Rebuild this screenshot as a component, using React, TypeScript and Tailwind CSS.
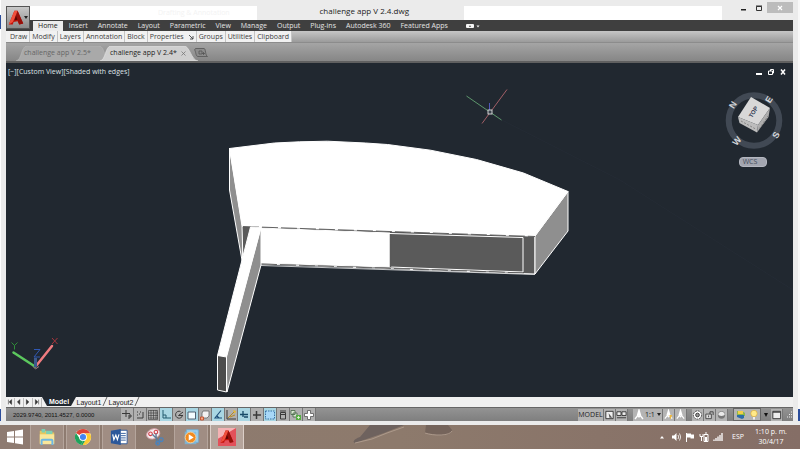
import type { ReactNode } from 'react';

const ribbonTabs = [
  'Insert',
  'Annotate',
  'Layout',
  'Parametric',
  'View',
  'Manage',
  'Output',
  'Plug-ins',
  'Autodesk 360',
  'Featured Apps',
];

const panels = ['Draw', 'Modify', 'Layers', 'Annotation', 'Block', 'Properties', 'Groups', 'Utilities', 'Clipboard'];

const AutocadMark = () => (
  <>
    <path d="M1 18 8 1h4l7 16-5 1-2-4-5 1-1 3z" fill="#c3140c" />
    <path d="M8 1h4l-2 6-4 8-5 3z" fill="#f0503c" />
    <path d="m10 6 3 6-5 1z" fill="#5a0803" />
    <path d="m12 1 7 16-5 1-4-11z" fill="#96100a" />
  </>
);

const TitleBar = () => (
  <header className="relative flex h-5 items-start pl-6">
    <button
      type="button"
      aria-label="Application menu"
      className="absolute left-0 top-1.5 z-10 flex h-[23px] w-6 items-center justify-center border border-[#555] bg-gradient-to-b from-[#c9c9c9] to-[#8b8b8b]"
    >
      <svg viewBox="0 0 20 20" className="h-4 w-4">
        <AutocadMark />
      </svg>
      <svg viewBox="0 0 4 3" className="h-[3px] w-1">
        <path d="M0 0h4L2 3z" fill="#222" />
      </svg>
    </button>
    <div className="mt-1.5 flex h-3.5 min-w-0 flex-[230] bg-white">
      <select
        aria-label="Workspace"
        className="h-3.5 w-full appearance-none bg-white pl-32 text-[7px] leading-3 text-[#f3f3f3]"
      >
        <option>Drafting &amp; Annotation</option>
      </select>
    </div>
    <h1 className="min-w-0 flex-[202] pl-2 text-center text-[8px] leading-[22px] whitespace-nowrap text-[#222]">
      challenge app V 2.4.dwg
    </h1>
    <input aria-label="Search" className="mt-1.5 h-3.5 min-w-0 flex-[262] bg-white" />
    <div className="mt-0.5 flex h-[11px] w-[71px] justify-end">
      <button type="button" aria-label="Minimize" className="flex w-4 items-center justify-center">
        <svg viewBox="0 0 8 8" className="h-2 w-2">
          <path d="M2 5h5v1.5H2z" fill="#222" />
        </svg>
      </button>
      <button type="button" aria-label="Maximize" className="flex w-4 items-center justify-center">
        <svg viewBox="0 0 8 8" className="h-2 w-2">
          <path d="M1.500 2.500h5v4h-5zM1 2h6" fill="none" stroke="#333" />
        </svg>
      </button>
      <button type="button" aria-label="Close" className="flex w-[26px] items-center justify-center bg-[#bcbcbc]">
        <svg viewBox="0 0 8 8" className="h-2 w-2">
          <path d="m2 2 4 4m0-4L2 6" stroke="#fff" strokeWidth="1.200" />
        </svg>
      </button>
    </div>
  </header>
);

const Ribbon = () => (
  <>
    <nav className="flex h-[11px] items-center gap-2.5 bg-[#3f3f3f] pl-[27px] text-[7px] leading-[11px] text-[#e4e4e4]">
      <button type="button" className="-mr-1 h-[10px] self-end bg-[#ececec] px-[5px] leading-[10px] text-[#222]">
        Home
      </button>
      {ribbonTabs.map((tab) => (
        <button type="button" key={tab}>
          {tab}
        </button>
      ))}
      <button type="button" aria-label="Minimize ribbon" className="ml-2">
        <svg viewBox="0 0 14 6" className="h-1.5 w-3.5">
          <rect x="0" y="1" width="8" height="4" rx="1" fill="#f4f4f4" />
          <path d="m2.800 3.800 1.200-1.500 1.200 1.500z" fill="#333" />
          <path d="M10.500 2.500h3L12 4.500z" fill="#eee" />
        </svg>
      </button>
    </nav>
    <div className="flex h-3 border-b border-[#8c8c8c] bg-gradient-to-b from-[#c6c6c6] to-[#9b9b9b] text-[7px] leading-[11px] text-[#3c3c3c]">
      {panels.map((panel) => (
        <button
          type="button"
          key={panel}
          className="flex items-center border-r border-[#c4c4c4] bg-[#f1f1f1] px-0.5 first:pl-1"
        >
          {panel}
          {panel === 'Properties' && (
            <svg viewBox="0 0 6 6" className="ml-1 h-1.5 w-1.5">
              <path d="m1 1 4 4M5 2v3H2" fill="none" stroke="#444" strokeWidth="0.900" />
            </svg>
          )}
        </button>
      ))}
    </div>
  </>
);

const FileTabs = () => (
  <div className="flex h-5 items-end border-b-2 border-[#606060] bg-gradient-to-b from-[#a5a5a5] to-[#868686] pl-2.5 text-[7px]">
    <div className="relative h-[15px] w-[84px]">
      <svg viewBox="0 0 94 15" preserveAspectRatio="none" className="absolute left-0 top-0 h-full w-[94px]">
        <path d="M0 15C6 14 5 0 11 0h72c6 0 5 14 11 15z" fill="#a9a9a9" stroke="#b9b9b9" strokeWidth="0.600" />
      </svg>
      <button type="button" className="relative pl-2 leading-[14px] whitespace-nowrap text-[#666]">
        challenge app V 2.5*
      </button>
    </div>
    <div className="relative h-[15px] w-[94px]">
      <svg viewBox="0 0 98 15" preserveAspectRatio="none" className="absolute left-0 top-0 h-full w-[98px]">
        <path d="M0 15C6 14 5 0 11 0h73c6 0 7 14 14 15z" fill="#cfcfcf" stroke="#e6e6e6" strokeWidth="0.600" />
      </svg>
      <div className="relative flex items-center gap-1 pl-2.5">
        <button type="button" className="leading-[14px] whitespace-nowrap text-[#1d1d1d]">
          challenge app V 2.4*
        </button>
        <button type="button" aria-label="Close tab">
          <svg viewBox="0 0 5 5" className="h-[5px] w-[5px]">
            <path d="m.5.500 4 4m0-4-4 4" stroke="#777" strokeWidth="0.800" />
          </svg>
        </button>
      </div>
    </div>
    <button type="button" aria-label="New tab" className="self-center">
      <svg viewBox="0 0 14 9" className="h-[9px] w-3.5">
        <path d="M1.500.500H10c2 0 1 7 3.500 8H4C1.500 8.500 2 3 .500 2z" fill="#8c8c8c" stroke="#555" strokeWidth="0.800" />
        <path d="M5 3h3v3H5zM8 5.500h3M9.500 4v3" fill="none" stroke="#555" strokeWidth="0.800" />
      </svg>
    </button>
  </div>
);

const Model = () => (
  <svg viewBox="6 63 787 334" className="absolute inset-0 h-full w-full" role="img" aria-label="Shaded model">
    <path d="M490 114 620 180 793 290" fill="none" stroke="#262e37" strokeWidth="0.600" />
    <g stroke="#fff" strokeLinejoin="round">
      <path d="m229.500 148 13 78v37l-13-73z" fill="#8f8f8f" />
      <path d="m242 226 293 10v38l-274-10-18-2z" fill="#5a5a5a" />
      <path d="m568 191.500-33 44.500v38l33-43z" fill="#8f8f8f" />
      <path
        d="m229.500 148.500 45-5.500 25-1.200 28-.6 38 1.800 22 1.500 43 5.700 46 9.300 47 13.500 44.500 18.500-33 44.500-293-10z"
        fill="#fff"
      />
      <path d="m261 228 129 5v34l-129-4z" fill="#fff" />
      <path d="m390 233.500 133 4V272l-133-5z" fill="#5a5a5a" />
    </g>
    <path d="M390.500 234v33" stroke="#5a5a5a" strokeWidth="1.500" />
    <path d="m243 226.500 292 10M261 264l263 9" fill="none" stroke="#555" strokeWidth="0.900" strokeDasharray="16 3" />
    <path d="m261 265.500 274 9" stroke="#eee" strokeWidth="0.800" />
    <g stroke="#fff" strokeLinejoin="round">
      <path d="M261 227v38l-34 127-1-35z" fill="#8f8f8f" />
      <path d="m250.500 227 10.500.500L226.500 357l-9-1.500z" fill="#fff" />
      <path d="m217.500 355.500 9 1.500v35l-9-2z" fill="#4c4c4c" />
    </g>
    <path d="m466.500 96 35 24" stroke="#63a373" strokeWidth="0.900" />
    <path d="m507 89.500-25 34" stroke="#b0646c" strokeWidth="0.900" />
    <path d="M489.500 103v8" stroke="#5058b8" />
    <rect x="488" y="110" width="4" height="4" fill="#39414b" stroke="#ddd" strokeWidth="0.900" />
  </svg>
);

const ViewCube = () => (
  <svg viewBox="0 0 60 60" className="absolute right-2 top-[27px] h-[60px] w-[60px]" role="img" aria-label="View cube">
    <circle cx="29" cy="30.500" r="25.300" fill="none" stroke="#414954" strokeWidth="6" />
    <path d="m26 7 19 11-12 17-20-8z" fill="#d8d8d8" />
    <path d="m13 27 20 8-1 7.500L14.500 33z" fill="#bdbdbd" />
    <path d="m33 35 12-17-1.500 9L32 42.500z" fill="#adadad" />
    <path d="m16 31 15.500 8.500m3-1L43 26" fill="none" stroke="#777" strokeWidth="0.800" strokeDasharray="2 1.500" />
    <g
      fontFamily="'Liberation Sans', sans-serif"
      fontWeight="bold"
      fill="#d4d6d9"
      fontSize="9"
      textAnchor="middle"
      dominantBaseline="central"
    >
      <text transform="translate(8 15) rotate(-58)">N</text>
      <text transform="translate(44 9.500) rotate(-58)">E</text>
      <text transform="translate(51 45) rotate(-58)">S</text>
      <text transform="translate(12 51) rotate(-50)">W</text>
      <text transform="translate(28.500 22) rotate(-58)" fontSize="6" fill="#333d55">
        TOP
      </text>
    </g>
  </svg>
);

const UcsIcon = () => (
  <svg viewBox="0 0 60 40" className="absolute bottom-6 left-0 h-10 w-[60px]" role="img" aria-label="UCS axes">
    <path d="M7.500 19.500 29 33.500" stroke="#5cc85e" strokeWidth="2.500" strokeLinecap="round" />
    <path d="m46 13-16 20" stroke="#f07c80" strokeWidth="2.500" strokeLinecap="round" />
    <path d="M29.500 25v9" stroke="#3c5a8c" strokeWidth="3" />
    <path d="m27 33.500 2.500 2.500L33 33.500" fill="none" stroke="#9a7a88" />
    <path d="m5.500 9.500 3 3 3-3m-3 3v4" fill="none" stroke="#2f8d38" />
    <path d="m46 5 5.500 6m0-6L46 11" stroke="#a8353c" />
    <path d="M28 16.500h6L28 24h6" fill="none" stroke="#3058b4" />
  </svg>
);

const Viewport = () => (
  <main className="relative min-h-0 flex-1 bg-[#212830]">
    <Model />
    <div className="relative flex items-start justify-between pl-0.5 pt-[3px]">
      <div className="text-[7px] leading-[11px] text-[#dfe3e6]">
        <button type="button">[−]</button>
        <button type="button">[Custom View]</button>
        <button type="button">[Shaded with edges]</button>
      </div>
      <div className="flex gap-1 pr-1.5 pt-0.5">
        <button type="button" aria-label="Minimize drawing">
          <svg viewBox="0 0 8 8" className="h-2 w-2">
            <path d="M1 5h6v2H1z" fill="#fff" />
          </svg>
        </button>
        <button type="button" aria-label="Restore drawing">
          <svg viewBox="0 0 8 8" className="h-2 w-2">
            <path d="M1.500 3h4v3.500h-4zM3.500 3V1.500h3V5h-1" fill="none" stroke="#fff" />
          </svg>
        </button>
        <button type="button" aria-label="Close drawing">
          <svg viewBox="0 0 8 8" className="h-2 w-2">
            <path d="m2 1.500 4 5m0-5-4 5" stroke="#fff" strokeWidth="1.500" />
          </svg>
        </button>
      </div>
    </div>
    <ViewCube />
    <button
      type="button"
      className="absolute right-[26px] top-[94px] h-2.5 w-7 rounded-sm border border-[#b4b7c0] bg-[#a2a5af] pr-1.5 text-center text-[7px] leading-2 text-[#454d5c]"
    >
      WCS
    </button>
    <UcsIcon />
  </main>
);

const layoutArrows = ['M3 1v6M7 1 4 4l3 3z', 'M6 1 3 4l3 3z', 'm3 1 3 3-3 3z', 'M7 1v6M3 1l3 3-3 3z'];

const LayoutTabs = () => (
  <div className="flex h-2.5 items-center bg-[#f0f0f0] font-['Liberation_Sans',sans-serif] text-[7px] leading-[9px] text-[#222]">
    {layoutArrows.map((d, i) => (
      <button type="button" key={d} aria-label={`Layout step ${i + 1}`} className="h-[9px] w-[9px] border-r border-[#bbb]">
        <svg viewBox="0 0 10 8" className="h-2 w-2">
          <path d={d} fill="#333" stroke="#333" strokeWidth="0.700" />
        </svg>
      </button>
    ))}
    <div className="relative h-full w-[34px]">
      <svg viewBox="0 0 34 10" preserveAspectRatio="none" className="absolute inset-0 h-full w-full">
        <path d="M0 0h34l-5 9H5z" fill="#212830" />
      </svg>
      <button type="button" className="relative w-full text-center font-bold text-white">
        Model
      </button>
    </div>
    {['Layout1', 'Layout2'].map((name) => (
      <div key={name} className="flex items-center">
        <button type="button" className="w-[26px] whitespace-nowrap">
          {name}
        </button>
        <svg viewBox="0 0 6 10" className="h-2.5 w-1.5">
          <path d="m1 9 4-9" stroke="#444" strokeWidth="0.800" />
        </svg>
      </div>
    ))}
  </div>
);

const line = { fill: 'none', stroke: '#3a3a3a', strokeWidth: 1 };

const toggles: { name: string; on: boolean; icon: ReactNode }[] = [
  { name: 'Infer constraints', on: false, icon: <path d="M5 1v7M1 4.500h8M8 10V6h2v2H8" {...line} /> },
  { name: 'Snap', on: false, icon: <path d="M3 9h6V3M3 3h1m1 2h1M3 6h1m2-3h1" {...line} /> },
  {
    name: 'Grid',
    on: false,
    icon: <path d="M1.500 1.500h9v9h-9zM4 1v9M6.500 1v9M9 1v9M1 4h10M1 6.500h10M1 9h10" {...line} strokeWidth={0.6} />,
  },
  { name: 'Ortho', on: true, icon: <path d="M3 1v8h8M3 6h3v3" {...line} stroke="#245c70" /> },
  { name: 'Polar', on: false, icon: <path d="M9.500 6.500a3.500 3.500 0 1 1-2-4M5.500 6.500 10 3M5.500 6.500H10" {...line} /> },
  { name: 'Object snap', on: true, icon: <path d="M2 3h7.500v7H2z" fill="#f4fdff" stroke="#456" strokeWidth={0.9} /> },
  {
    name: '3D object snap',
    on: false,
    icon: (
      <>
        <path d="M4 2h6v5L8 9H3V4z" fill="#f2f2f2" stroke="#666" strokeWidth={0.8} />
        <path d="M1.500 8h3v3h-3z" fill="#f7a887" stroke="#c3512c" strokeWidth={0.9} />
      </>
    ),
  },
  {
    name: 'Object snap tracking',
    on: true,
    icon: <path d="M9 1.500 3 9h7M5 7l2 2" {...line} stroke="#1d4d78" strokeWidth={1.1} />,
  },
  {
    name: 'Dynamic UCS',
    on: false,
    icon: (
      <>
        <path d="M2 1v9h9" {...line} />
        <path d="m3 9 6-6m-4 5 5-2" stroke="#b98a1e" />
        <path d="m8 1 3 1-1 3z" fill="#e8b92f" />
      </>
    ),
  },
  { name: 'Dynamic input', on: true, icon: <path d="M5 2v6M2 5.500h8M6 8h4" {...line} stroke="#174a68" strokeWidth={1.3} /> },
  { name: 'Lineweight', on: false, icon: <path d="M5.500 2v8M2 6h8" {...line} strokeWidth={1.5} /> },
  {
    name: 'Transparency',
    on: true,
    icon: <path d="M1.500 2h9v8h-9z" fill="#a8d8f8" stroke="#2b67a0" strokeWidth={0.9} strokeDasharray="1.500 1" />,
  },
  { name: 'Quick properties', on: false, icon: <path d="M3.500 3.500h5V10h-5zM3 2h6M3 5.500h5" {...line} /> },
  {
    name: 'Selection cycling',
    on: false,
    icon: (
      <>
        <path d="M1 1.500h4v4H1zM3 4h4v4H3z" fill="#d8e8d0" stroke="#446644" strokeWidth={0.8} />
        <path d="M6 6h5v5H6z" fill="#55ae42" />
        <path d="M8.500 7v3M7 8.500h3" stroke="#e8f7dc" strokeWidth={0.8} />
      </>
    ),
  },
  {
    name: 'Annotation monitor',
    on: false,
    icon: <path d="M4.500 1.500h3v3h3v3h-3v3h-3v-3h-3v-3h3z" fill="#fff" stroke="#555" strokeWidth={0.8} />,
  },
];

const StatusButton = ({ name, children }: { name: string; children: ReactNode }) => (
  <button type="button" aria-label={name} className="flex h-3 w-3 items-center justify-center border-r border-[#777] bg-[#b4b4b4]">
    <svg viewBox="0 0 12 12" className="h-3 w-3">
      {children}
    </svg>
  </button>
);

const Compass = () => <path d="M6 1v4L2 10m4-5 4 5M6 1l1.500 5L6 8 4.500 6z" fill="none" stroke="#fff" strokeWidth="1.300" />;

const StatusBar = () => (
  <footer className="flex h-3.5 items-center border-t border-[#666] bg-gradient-to-b from-[#939393] to-[#7f7f7f]">
    <output className="w-[115px] pl-[7px] font-['Liberation_Sans',sans-serif] text-[6px] leading-3 whitespace-nowrap text-[#111]">
      2029.9740, 2011.4527, 0.0000
    </output>
    <div className="flex flex-1">
      {toggles.map(({ name, on, icon }) => (
        <button
          type="button"
          key={name}
          aria-label={name}
          aria-pressed={on}
          className={`h-[13px] w-[13px] border-r border-[#777] ${on ? 'bg-[#a9d6e3]' : 'bg-[#b0b0b0]'}`}
        >
          <svg viewBox="0 0 12 12" className="h-3 w-3">
            {icon}
          </svg>
        </button>
      ))}
    </div>
    <div className="flex items-center gap-[5px]">
      <div className="flex bg-[#b4b4b4]">
        <button type="button" className="w-[26px] border-r border-[#777] text-[7px] leading-3 text-[#222]">
          MODEL
        </button>
        <StatusButton name="Quick view layouts">
          <path d="M2 2h8v8H2z" fill="#eee" stroke="#333" />
          <path d="m5 4 4 5H6z" fill="#555" />
        </StatusButton>
        <StatusButton name="Quick view drawings">
          <path d="M1 2.500h4.500v4H1zM6.500 2.500H11v4H6.500zM1 9h10" fill="#eee" stroke="#333" />
        </StatusButton>
      </div>
      <div className="flex bg-[#b4b4b4]">
        <button type="button" className="flex w-[30px] items-center border-r border-[#777] text-[7px] leading-3 text-[#222]">
          <svg viewBox="0 0 12 12" className="h-3 w-3">
            <Compass />
          </svg>
          1:1
          <svg viewBox="0 0 4 3" className="ml-0.5 h-[3px] w-1">
            <path d="M0 0h4L2 3z" fill="#222" />
          </svg>
        </button>
        <StatusButton name="Annotation visibility">
          <Compass />
          <path d="M7 6h3L8 11z" fill="#f0b93a" />
        </StatusButton>
        <StatusButton name="Auto scale">
          <Compass />
        </StatusButton>
      </div>
      <div className="flex">
        <StatusButton name="Workspace switching">
          <circle cx="6" cy="6" r="4.500" fill="#fff" stroke="#444" strokeDasharray="2 1" />
          <circle cx="6" cy="6" r="2" fill="#999" stroke="#333" />
        </StatusButton>
        <StatusButton name="Lock toolbars">
          <path d="M2 5h6v5H2z" fill="#ddd" stroke="#444" />
          <path d="M6.500 5V2.500h3.500V6M5 6.500v2" fill="none" stroke="#444" />
        </StatusButton>
        <StatusButton name="Hardware acceleration">
          <circle cx="6" cy="6" r="4" fill="#777" />
          <path d="M2.500 5.500c0-4 7-4 7 0 0 2-7 2-7 0z" fill="#e9e9e9" />
        </StatusButton>
      </div>
      <div className="flex items-center gap-0.5">
        <button type="button" aria-label="Isolate objects" className="h-[13px] w-7 border border-[#666] bg-[#b4b4b4]">
          <svg viewBox="0 0 26 11" className="h-[11px] w-[26px]">
            <path d="M3 2h5l3 2v3H3z" fill="#8cb84b" />
            <path d="M3 6h7v3l-2 1-5-2z" fill="#2d6ca8" />
            <path d="M4 2h5v3H4z" fill="#f1cf48" />
            <circle cx="20" cy="4.500" r="3.200" fill="#ffe989" stroke="#d5a42e" strokeWidth="0.600" />
            <path d="M19 8h2v2.500h-2z" fill="#eee" />
          </svg>
        </button>
        <svg viewBox="0 0 6 4" className="h-1 w-1.5">
          <path d="M1 0h4L3 4z" fill="#111" />
        </svg>
        <StatusButton name="Clean screen">
          <path d="M2 2h8.500v8H2z" fill="#eee" stroke="#333" />
          <path d="M2 3h8" stroke="#333" />
        </StatusButton>
        <svg viewBox="0 0 8 8" className="h-2 w-2">
          <path d="M6 1h1M4 3.500h1m1 0h1M2 6h1m1 0h1m1 0h1" stroke="#eee" strokeWidth="1.200" />
        </svg>
      </div>
    </div>
  </footer>
);

const Explorer = () => (
  <>
    <path d="M2 3h7l1 2h8v12H2z" fill="#e9c75c" />
    <path d="M4 1h4v4H4zM9 3h7v4H9z" fill="#7ed0b4" />
    <path d="M2 7h16v11H2z" fill="#f9e79b" />
    <path d="M4 19v-5q0-1 1-1h10q1 0 1 1v5" fill="none" stroke="#6db7e3" strokeWidth="2.200" />
  </>
);

const Chrome = () => (
  <>
    <circle cx="10" cy="10" r="9" fill="#fff" />
    <path d="M10 10 2.200 5.500A9 9 0 0 1 17.800 5.500L18 6H10z" fill="#dd4437" />
    <path d="M10 6h8a9 9 0 0 1-8.500 13L13.500 12z" fill="#fccb32" />
    <path d="M2.200 5.500 6.500 12 10 14l-2 4.800A9 9 0 0 1 2.200 5.500z" fill="#1fa25b" />
    <path d="M10 14h2.500L9.500 19 8 18.800z" fill="#1fa25b" />
    <circle cx="10" cy="10" r="4.300" fill="#fff" />
    <circle cx="10" cy="10" r="3.400" fill="#4284f3" />
  </>
);

const Word = () => (
  <>
    <path d="M10 2.500h9v15h-9z" fill="#fff" stroke="#2b579a" />
    <path d="M12 6h5.500M12 8.500h5.500M12 11h5.500M12 13.500h5.500" stroke="#2b579a" />
    <path d="m1 3 11-2v18L1 17z" fill="#2b579a" />
    <path d="m3 7 1.300 6L6.500 8l1.700 5L10 7" fill="none" stroke="#fff" strokeWidth="1.300" />
  </>
);

const Snip = () => (
  <>
    <ellipse cx="8" cy="6.500" rx="7.500" ry="5.500" fill="#f5eef0" stroke="#d8a3aa" transform="rotate(-20 8 6.500)" />
    <circle cx="5" cy="6.500" r="2" fill="none" stroke="#d33c45" strokeWidth="1.200" />
    <circle cx="11" cy="4.500" r="2" fill="none" stroke="#d33c45" strokeWidth="1.200" />
    <path d="m7 7 9 9m-5-10 1 12" stroke="#607b98" strokeWidth="1.500" />
    <circle cx="17" cy="13" r="2" fill="none" stroke="#4a83bd" strokeWidth="1.500" />
    <circle cx="13" cy="17" r="2" fill="none" stroke="#4a83bd" strokeWidth="1.500" />
  </>
);

const Player = () => (
  <>
    <path d="M5 2h13v14H5z" fill="#a6d3ee" stroke="#6eafd7" />
    <path d="M3 4h13v14H3z" fill="#79b9df" opacity="0.800" />
    <circle cx="9.500" cy="10.500" r="6" fill="#f28a1e" stroke="#fbd5a0" />
    <path d="m7.500 7 5.500 3.500L7.500 14z" fill="#fff" />
  </>
);

const apps: { name: string; box: string; icon: ReactNode }[] = [
  { name: 'File Explorer', box: 'border-[#b5a59c] bg-[#a08d83]', icon: <Explorer /> },
  { name: 'Google Chrome', box: 'border-[#b5a59c] bg-[#a08d83]', icon: <Chrome /> },
  { name: 'Word', box: 'border-[#b5a59c] bg-[#a08d83]', icon: <Word /> },
  { name: 'Snipping Tool', box: 'border-transparent', icon: <Snip /> },
  { name: 'Media Player', box: 'border-[#b5a59c] bg-[#a08d83]', icon: <Player /> },
  {
    name: 'AutoCAD',
    box: 'border-[#dccfc8] bg-[#b5a49b]',
    icon: (
      <>
        <path d="M0 0h20v20H0z" fill="#e2515a" />
        <path d="M0 0h20L0 12z" fill="#f3b3b4" />
        <g transform="translate(2 2) scale(0.800)">
          <AutocadMark />
        </g>
      </>
    ),
  },
];

const Taskbar = () => (
  <footer className="relative flex h-6 items-center bg-gradient-to-r from-[#8e7b71] via-[#8d7a6c] to-[#856e66] pl-[7px] pr-[11px] text-white">
    <svg viewBox="0 0 140 24" className="absolute left-[350px] top-0 h-6 w-[140px]">
      <path d="M20 0h34L34 8 5 18C2 17 4 14 10 12z" fill="#6e625e" />
      <path d="M54 2 37 8 22 14 5 18" fill="none" stroke="#b09d8e" strokeWidth="0.900" />
      <path d="M76 0h22l4 5c0 5-8 6-16 5l-11-2z" fill="#75645b" />
      <path d="M75 8c9 3 25 3 27-2" fill="none" stroke="#b09d8e" strokeWidth="0.900" />
    </svg>
    <button type="button" aria-label="Start" className="mr-[7px]">
      <svg viewBox="0 0 16 16" className="h-4 w-4">
        <path d="m0 3 7-1v5.500H0zM8 1.800 16 .500v7H8zM0 8.500h7V14l-7-1zM8 8.500h8v7L8 14.200z" fill="#fff" />
      </svg>
    </button>
    <div className="flex gap-0.5">
      {apps.map(({ name, box, icon }) => (
        <button type="button" key={name} aria-label={name} className={`flex h-6 w-[34px] items-center justify-center border-x ${box}`}>
          <svg viewBox="0 0 20 20" className="h-[18px] w-[18px]">
            {icon}
          </svg>
        </button>
      ))}
    </div>
    <div className="ml-auto flex items-center gap-1">
      <svg viewBox="0 0 6 6" className="mr-0.5 h-1.5 w-1.5">
        <path d="M1 4.500h4L3 2z" fill="#fff" />
      </svg>
      <svg viewBox="0 0 10 10" className="h-2.5 w-2.5">
        <path d="M1 3.500h2l2.500-2.500v8L3 6.500H1z" fill="#fff" />
        <path d="M7 3q1.500 2 0 4M8.500 1.500q2.500 3.500 0 7" fill="none" stroke="#fff" strokeWidth="0.800" />
      </svg>
      <svg viewBox="0 0 10 10" className="h-2.5 w-2.5">
        <path d="M1.500 1v9" stroke="#fff" />
        <path d="M2 1.500h4v1h3v4H5.500v-1H2z" fill="#fff" />
      </svg>
      <svg viewBox="0 0 10 10" className="h-2.5 w-2.5">
        <path d="M5 2.500h4v7H5zM6 1h2M1 2v2.500h3V2M2.500 4.500V9" fill="none" stroke="#fff" />
        <path d="M6 5h2v4H6z" fill="#fff" />
      </svg>
      <svg viewBox="0 0 10 10" className="h-2.5 w-2.5">
        <path d="M1 9V7.500M3 9V6M5 9V4.500M7 9V3M9 9V1" stroke="#fff" strokeWidth="1.300" />
      </svg>
      <span className="w-[22px] text-center text-[7px]">ESP</span>
      <time className="w-9 text-center text-[7px] leading-[10px] whitespace-nowrap">
        1:10 p. m.
        <br />
        30/4/17
      </time>
    </div>
  </footer>
);

const App = () => {
  return (
    <div className="flex min-h-screen flex-col bg-[#ebebeb] font-['Open_Sans',sans-serif]">
      <div className="flex flex-1 border-b-4 border-[#ebebeb]">
        <div className="flex w-px flex-col justify-between bg-white pt-[15px]">
          <div className="h-3.5 bg-[#2b4d9b]" />
          <div className="h-3 bg-[#2b4d9b]" />
        </div>
        <div className="flex min-w-0 flex-1 flex-col px-[5px]">
          <TitleBar />
          <Ribbon />
          <FileTabs />
          <Viewport />
          <LayoutTabs />
          <StatusBar />
        </div>
        <div className="flex w-0.5 flex-col justify-end bg-[#f8f8f8]">
          <div className="h-3 bg-[#2b4d9b]" />
        </div>
      </div>
      <Taskbar />
    </div>
  );
};

export default App;
